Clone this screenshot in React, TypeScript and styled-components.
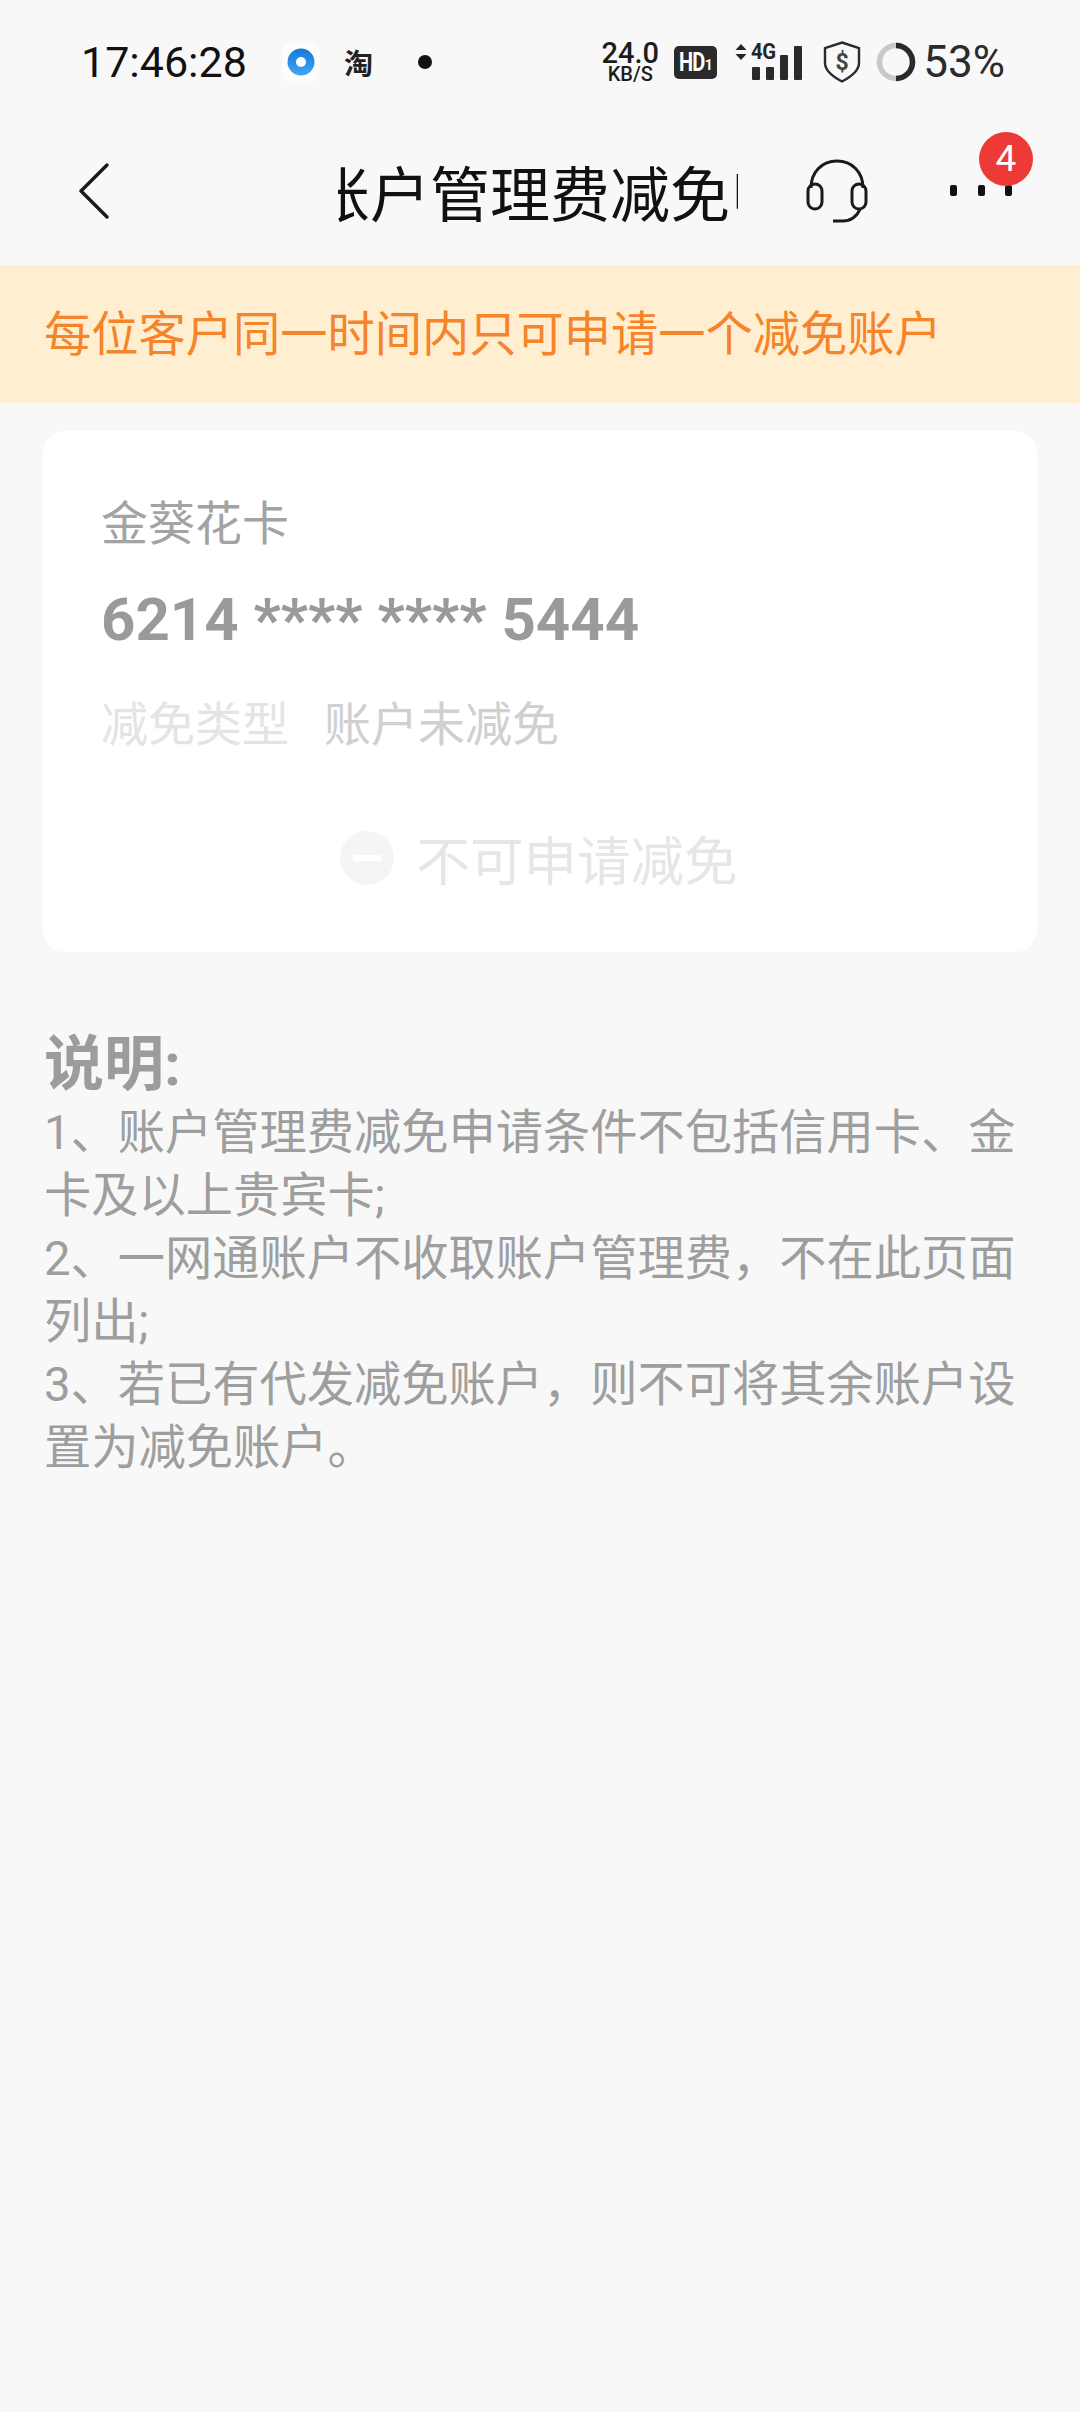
import styled, { createGlobalStyle } from "styled-components";

const GlobalStyle = createGlobalStyle`
    html, body {
        margin: 0;
        padding: 0;
        background: #f8f8f8;
    }
    * {
        box-sizing: border-box;
    }
`;

const noteLines = [
    "1、账户管理费减免申请条件不包括信用卡、金卡及以上贵宾卡;",
    "2、一网通账户不收取账户管理费，不在此页面列出;",
    "3、若已有代发减免账户，则不可将其余账户设置为减免账户。",
];

const App = () => {
    return (
        <Page>
            <GlobalStyle />
            <StatusBar>
                <StatusLeft>
                    <Time>17:46:28</Time>
                    <AppIcon>
                        <svg width="34" height="34" viewBox="0 0 34 34">
                            <defs>
                                <linearGradient id="blue" x1="0" y1="0" x2="0" y2="1">
                                    <stop offset="0" stopColor="#1579dc" />
                                    <stop offset="1" stopColor="#3fa6f2" />
                                </linearGradient>
                            </defs>
                            <circle cx="17" cy="17" r="13.5" fill="url(#blue)" />
                            <circle cx="17" cy="17" r="5" fill="#fff" />
                        </svg>
                    </AppIcon>
                    <TaoGlyph>淘</TaoGlyph>
                    <Dot />
                </StatusLeft>
                <StatusRight>
                    <Speed>
                        <SpeedValue>24.0</SpeedValue>
                        <SpeedUnit>KB/S</SpeedUnit>
                    </Speed>
                    <HdBadge>
                        <HdText>HD</HdText>
                        <HdIndex>1</HdIndex>
                    </HdBadge>
                    <Signal>
                        <svg width="12" height="16" viewBox="0 0 12 16">
                            <path d="M6 0l5.500 6H.5zM6 16L.5 10h11z" fill="#262626" />
                        </svg>
                        <SignalLabel>4G</SignalLabel>
                        <Bar $h={13} />
                        <Bar $h={13} />
                        <Bar $h={25} />
                        <Bar $h={34} />
                    </Signal>
                    <ShieldIcon width="38" height="42" viewBox="0 0 38 42">
                        <path
                            d="M19 1.500l17 5.500v15c0 8-7.500 13.500-17 18.500C9.500 35.500 2 30 2 22V7z"
                            fill="none"
                            stroke="#2b2b2b"
                            strokeWidth="2.400"
                        />
                        <text
                            x="19"
                            y="29"
                            textAnchor="middle"
                            fontFamily="Roboto, sans-serif"
                            fontWeight="700"
                            fontSize="23"
                            fill="#444"
                        >
                            $
                        </text>
                    </ShieldIcon>
                    <svg width="40" height="40" viewBox="0 0 40 40">
                        <circle cx="20" cy="20" r="16.500" fill="none" stroke="#c9c9c9" strokeWidth="5.500" />
                        <path d="M20 3.500a16.500 16.500 0 0 1 0 33" fill="none" stroke="#2a2a2a" strokeWidth="5.500" />
                    </svg>
                    <Battery>53%</Battery>
                </StatusRight>
            </StatusBar>

            <NavBar>
                <BackButton>
                    <svg width="32" height="56" viewBox="0 0 32 56">
                        <path d="M29 2L3 28 29 54" fill="none" stroke="#1a1a1a" strokeWidth="3.400" strokeLinecap="round" strokeLinejoin="round" />
                    </svg>
                </BackButton>
                <TitleClip>
                    <Title>账户管理费减免申请</Title>
                </TitleClip>
                <Headset>
                    <svg width="64" height="66" viewBox="0 0 64 66">
                        <path d="M6 30C6 14 17 3 32 3s26 11 26 27" fill="none" stroke="#1a1a1a" strokeWidth="3" />
                        <rect x="3" y="26" width="14" height="25" rx="7" fill="none" stroke="#1a1a1a" strokeWidth="3" />
                        <rect x="47" y="26" width="14" height="25" rx="7" fill="none" stroke="#1a1a1a" strokeWidth="3" />
                        <path d="M55 51c-3 8-10 12-17 12h-10" fill="none" stroke="#1a1a1a" strokeWidth="3" />
                    </svg>
                </Headset>
                <MoreButton>
                    <MoreDot />
                    <MoreDot />
                    <MoreDot />
                    <Badge>4</Badge>
                </MoreButton>
            </NavBar>

            <Notice>每位客户同一时间内只可申请一个减免账户</Notice>

            <Card>
                <CardName>金葵花卡</CardName>
                <CardNumber>6214 **** **** 5444</CardNumber>
                <TypeRow>
                    <TypeLabel>减免类型</TypeLabel>
                    <TypeValue>账户未减免</TypeValue>
                </TypeRow>
                <ApplyRow>
                    <MinusIcon />
                    <ApplyText>不可申请减免</ApplyText>
                </ApplyRow>
            </Card>

            <Notes>
                <NotesTitle>说明:</NotesTitle>
                {noteLines.map((line) => (
                    <NoteLine key={line}>{line}</NoteLine>
                ))}
            </Notes>
        </Page>
    );
};

export default App;

const cjk = `"Noto Sans CJK SC", "Noto Sans", sans-serif`;

const Page = styled.div`
    width: 1080px;
    height: 2412px;
    overflow: hidden;
    background: #f8f8f8;
    font-family: Roboto, ${cjk};
`;

const StatusBar = styled.div`
    height: 124px;
    padding: 0 75px 0 81px;
    display: flex;
    align-items: center;
    justify-content: space-between;
`;

const StatusLeft = styled.div`
    display: flex;
    align-items: center;
`;

const Time = styled.span`
    width: 201px;
    font-size: 43px;
    color: #111;
    white-space: nowrap;
`;

const AppIcon = styled.span`
    width: 38px;
    height: 38px;
    display: flex;
    align-items: center;
    justify-content: center;
    background: #fdfdfd;
    border-radius: 8px;
`;

const TaoGlyph = styled.span`
    margin-left: 24px;
    width: 30px;
    font-size: 29px;
    font-weight: 700;
    line-height: 38px;
    color: #222;
    font-family: ${cjk};
`;

const Dot = styled.span`
    margin-left: 44px;
    width: 14px;
    height: 14px;
    border-radius: 50%;
    background: #111;
`;

const StatusRight = styled.div`
    display: flex;
    align-items: center;
    gap: 15px;
`;

const Speed = styled.div`
    width: 58px;
    display: flex;
    flex-direction: column;
    align-items: center;
    color: #1c1c1c;
`;

const SpeedValue = styled.span`
    font-size: 29px;
    font-weight: 500;
    line-height: 24px;
`;

const SpeedUnit = styled.span`
    font-size: 20px;
    font-weight: 500;
    line-height: 18px;
`;

const HdBadge = styled.span`
    width: 43px;
    height: 33px;
    background: #2a2a2a;
    border-radius: 5px;
    color: #fff;
    display: flex;
    align-items: center;
    justify-content: center;
    font-weight: 700;
`;

const HdText = styled.span`
    display: inline-block;
    width: 26px;
    font-size: 25px;
    line-height: 33px;
    letter-spacing: -1px;
    transform: scaleX(0.8);
    transform-origin: left;
`;

const HdIndex = styled.span`
    margin-top: 5px;
    font-size: 14px;
    line-height: 20px;
`;

const Signal = styled.div`
    position: relative;
    margin-left: 3px;
    width: 67px;
    height: 36px;
    display: flex;
    align-items: flex-end;
    justify-content: flex-end;
    gap: 6px;

    svg {
        position: absolute;
        left: 0;
        top: 0;
    }
`;

const SignalLabel = styled.span`
    position: absolute;
    left: 16px;
    top: -2px;
    font-size: 22px;
    font-weight: 700;
    line-height: 20px;
    letter-spacing: -0.500px;
    color: #262626;
    transform: scaleX(0.92);
    transform-origin: left;
`;

const Bar = styled.span<{ $h: number }>`
    width: 8px;
    height: ${(p) => p.$h}px;
    background: #2a2a2a;
    border-radius: 1px;
`;

const ShieldIcon = styled.svg`
    margin-left: 6px;
`;

const Battery = styled.span`
    margin-left: -8px;
    font-size: 44px;
    color: #2b2b2b;
    white-space: nowrap;
`;

const NavBar = styled.div`
    height: 141px;
    padding-bottom: 8px;
    display: flex;
    align-items: center;
`;

const BackButton = styled.div`
    margin-left: 78px;
    width: 260px;
    display: flex;
    align-items: center;
`;

const TitleClip = styled.div`
    width: 400px;
    overflow: hidden;
`;

const Title = styled.div`
    margin-left: -28px;
    width: 600px;
    font-family: ${cjk};
    font-size: 60px;
    line-height: 76px;
    color: #111;
    white-space: nowrap;
`;

const Headset = styled.div`
    margin-left: 67px;
    width: 64px;
    height: 66px;
`;

const MoreButton = styled.div`
    position: relative;
    margin-left: 81px;
    width: 62px;
    display: flex;
    justify-content: space-between;
`;

const MoreDot = styled.span`
    width: 7px;
    height: 11px;
    background: #111;
    border-radius: 2px;
`;

const Badge = styled.span`
    position: absolute;
    left: 29px;
    top: -53px;
    width: 54px;
    height: 54px;
    border-radius: 50%;
    background: #ee3a37;
    color: #fff;
    font-size: 37px;
    line-height: 54px;
    text-align: center;
`;

const Notice = styled.div`
    height: 138px;
    padding: 0 0 8px 44px;
    display: flex;
    align-items: center;
    background: #ffefd0;
    color: #f5842b;
    font-family: ${cjk};
    font-size: 47.25px;
    white-space: nowrap;
`;

const Card = styled.div`
    margin: 28px 43px 0;
    height: 521px;
    padding: 55px 58px 0;
    background: #fff;
    border-radius: 22px;
    font-family: ${cjk};
`;

const CardName = styled.div`
    font-size: 47px;
    line-height: 68px;
    color: #a3a3a3;
`;

const CardNumber = styled.div`
    margin-top: 31px;
    font-family: Roboto, sans-serif;
    font-size: 60px;
    font-weight: 700;
    line-height: 70px;
    color: #9a9a9a;
`;

const TypeRow = styled.div`
    margin-top: 32px;
    display: flex;
    gap: 35px;
    font-size: 47px;
    line-height: 68px;
`;

const TypeLabel = styled.span`
    color: #e4e4e4;
`;

const TypeValue = styled.span`
    color: #d0d0d0;
`;

const ApplyRow = styled.div`
    margin-top: 68px;
    display: flex;
    align-items: center;
    justify-content: center;
    gap: 23px;
    padding-right: 3px;
`;

const MinusIcon = styled.span`
    position: relative;
    width: 54px;
    height: 54px;
    border-radius: 50%;
    background: #f5f5f5;

    &::after {
        content: "";
        position: absolute;
        left: 13px;
        right: 13px;
        top: 24px;
        height: 6px;
        background: #fff;
    }
`;

const ApplyText = styled.span`
    font-size: 53.5px;
    line-height: 70px;
    color: #e6e6e6;
`;

const Notes = styled.div`
    margin-top: 76px;
    padding: 0 44px;
    font-family: ${cjk};
    color: #9e9e9e;
`;

const NotesTitle = styled.div`
    font-family: Roboto, ${cjk};
    font-size: 60px;
    font-weight: 700;
    line-height: 74px;
    color: #9c9c9c;
`;

const NoteLine = styled.div`
    font-family: Roboto, ${cjk};
    font-size: 47.25px;
    line-height: 63px;
`;
